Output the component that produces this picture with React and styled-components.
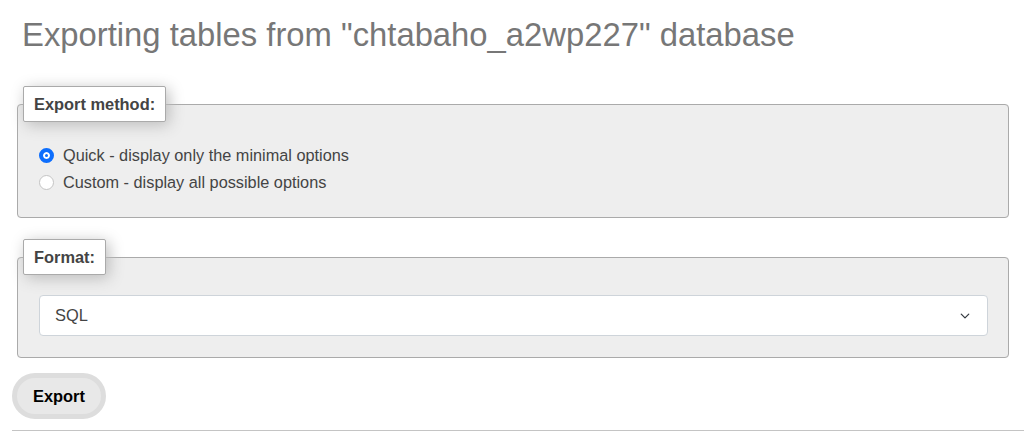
import React, { useState } from 'react';
import styled, { createGlobalStyle } from 'styled-components';

const GlobalStyle = createGlobalStyle`
  body {
    margin: 0;
    background: #fff;
    font-family: "Liberation Sans", Arial, sans-serif;
    color: #444;
  }
`;

const Page = styled.div`
  padding: 16px 0 0 12px;
`;

const Title = styled.h2`
  margin: 0 0 33px 10px;
  font-size: 32.8px;
  font-weight: normal;
  line-height: 37px;
  color: #777;
`;

const Fieldset = styled.fieldset`
  margin: 0 15px 21px 5px;
  padding: 0;
  background: #eee;
  border: 1px solid #aaa;
  border-radius: 4px;
  min-width: 0;
`;

const Legend = styled.legend`
  margin-left: 5px;
  padding: 9px 10px;
  background: #fff;
  border: 1px solid #aaa;
  border-radius: 2px;
  box-shadow: 3px 3px 15px #bbb;
  font-size: 16.4px;
  font-weight: bold;
  line-height: 16px;
  color: #444;
`;

const Body = styled.div`
  padding: 20px 20px 21px 21px;
`;

const RadioRow = styled.label`
  display: flex;
  align-items: center;
  gap: 9px;
  height: 27px;
  font-size: 16.3px;
  color: #444;
  cursor: pointer;
`;

const Radio = styled.span`
  width: 15px;
  height: 15px;
  box-sizing: border-box;
  border-radius: 50%;
  flex-shrink: 0;
  background: ${(p) => (p.$checked ? '#0d6efd' : '#fff')};
  border: ${(p) => (p.$checked ? '4px solid #0d6efd' : '1px solid #c4c4c4')};
  box-shadow: ${(p) => (p.$checked ? 'inset 0 0 0 2px #fff' : 'none')};
`;

const Select = styled.div`
  display: flex;
  align-items: center;
  justify-content: space-between;
  height: 41px;
  box-sizing: border-box;
  padding: 0 15px 0 15px;
  background: #fff;
  border: 1px solid #ced4da;
  border-radius: 4px;
  font-size: 16.4px;
  color: #444;
`;

const Button = styled.button`
  display: block;
  margin-top: -6px;
  height: 46px;
  padding: 0 16px;
  border: 5px solid #ddd;
  border-radius: 23px;
  background: #e8e8e8;
  font-family: "Liberation Sans", Arial, sans-serif;
  font-size: 16.4px;
  font-weight: bold;
  color: #000;
`;

const Rule = styled.hr`
  margin: 11px 0 0;
  border: 0;
  border-top: 1px solid #c4c4c4;
`;

const methods = [
  { id: 'quick', label: 'Quick - display only the minimal options' },
  { id: 'custom', label: 'Custom - display all possible options' },
];

export default function App() {
  const [method, setMethod] = useState('quick');
  return (
    <Page>
      <GlobalStyle />
      <Title>Exporting tables from "chtabaho_a2wp227" database</Title>

      <Fieldset>
        <Legend>Export method:</Legend>
        <Body>
          {methods.map((m) => (
            <RadioRow key={m.id} onClick={() => setMethod(m.id)}>
              <Radio $checked={method === m.id} />
              {m.label}
            </RadioRow>
          ))}
        </Body>
      </Fieldset>

      <Fieldset>
        <Legend>Format:</Legend>
        <Body>
          <Select>
            SQL
            <svg width="14" height="10" viewBox="0 0 16 16">
              <path d="m2 5 6 6 6-6" fill="none" stroke="#343a40" strokeWidth="2" strokeLinecap="round" strokeLinejoin="round" />
            </svg>
          </Select>
        </Body>
      </Fieldset>

      <Button>Export</Button>
      <Rule />
    </Page>
  );
}
